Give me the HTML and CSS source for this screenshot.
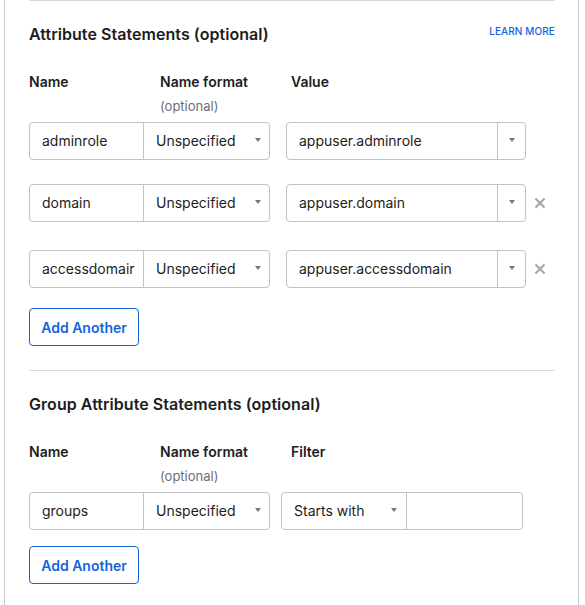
FILE: index.html
```html
<!DOCTYPE html>
<html lang="en">
<head>
<meta charset="utf-8">
<title>SAML Settings</title>
<link rel="stylesheet" href="styles.css">
</head>
<body>
<div class="panel">
  <section class="statements">
    <div class="section-head">
      <h2 class="section-title">Attribute Statements (optional)</h2>
      <a class="learn-more" href="#">LEARN MORE</a>
    </div>
    <div class="col-heads">
      <div class="col-head">Name</div>
      <div class="col-head">Name format<span class="hint">(optional)</span></div>
      <div class="col-head">Value</div>
    </div>

    <div class="row">
      <div class="field name-field">adminrole</div>
      <div class="field select fmt-select">Unspecified<span class="caret"></span></div>
      <div class="field value-field">appuser.adminrole</div>
      <div class="field combo-btn"><span class="caret"></span></div>
    </div>
    <div class="row row-second">
      <div class="field name-field">domain</div>
      <div class="field select fmt-select">Unspecified<span class="caret"></span></div>
      <div class="field value-field">appuser.domain</div>
      <div class="field combo-btn"><span class="caret"></span></div>
      <span class="remove" aria-label="Remove">
        <svg width="12" height="12" viewBox="0 0 12 12"><path d="M1.5 1.5 L10.5 10.5 M10.5 1.5 L1.5 10.5" stroke="currentColor" stroke-width="2.2" stroke-linecap="butt"/></svg>
      </span>
    </div>
    <div class="row row-third">
      <div class="field name-field">accessdomair</div>
      <div class="field select fmt-select">Unspecified<span class="caret"></span></div>
      <div class="field value-field">appuser.accessdomain</div>
      <div class="field combo-btn"><span class="caret"></span></div>
      <span class="remove" aria-label="Remove">
        <svg width="12" height="12" viewBox="0 0 12 12"><path d="M1.5 1.5 L10.5 10.5 M10.5 1.5 L1.5 10.5" stroke="currentColor" stroke-width="2.2" stroke-linecap="butt"/></svg>
      </span>
    </div>
    <button class="add-btn" type="button">Add Another</button>
  </section>

  <section class="statements group">
    <div class="section-head">
      <h2 class="section-title">Group Attribute Statements (optional)</h2>
    </div>
    <div class="col-heads">
      <div class="col-head">Name</div>
      <div class="col-head">Name format<span class="hint">(optional)</span></div>
      <div class="col-head">Filter</div>
    </div>
    <div class="row">
      <div class="field name-field">groups</div>
      <div class="field select fmt-select">Unspecified<span class="caret"></span></div>
      <div class="field select filter-select">Starts with<span class="caret"></span></div>
      <div class="field filter-value"></div>
    </div>
    <button class="add-btn add-btn-group" type="button">Add Another</button>
  </section>
</div>
</body>
</html>
```

FILE: styles.css
```css
* {
  box-sizing: border-box;
}

html, body {
  margin: 0;
  padding: 0;
  background: #ffffff;
}

body {
  font-family: "Inter", "Liberation Sans", sans-serif;
  color: #1d1d21;
  font-size: 14px;
}

.panel {
  margin-left: 4px;
  width: 575px;
  min-height: 605px;
  border-left: 1px solid #c8c8cf;
  border-right: 1px solid #c8c8cf;
  padding: 0 23px 0 24px;
}

.statements {
  border-top: 1px solid #d7d7dc;
  padding: 23px 0 24px;
}

.section-head {
  display: flex;
  justify-content: space-between;
  align-items: flex-start;
  height: 20px;
}

.section-title {
  margin: 0;
  font-size: 16px;
  line-height: 20px;
  font-weight: 600;
  letter-spacing: 0.05px;
}

.learn-more {
  font-size: 10px;
  line-height: 14px;
  font-weight: 500;
  color: #1662dd;
  text-decoration: none;
  letter-spacing: 0.1px;
}

.col-heads {
  display: flex;
  margin-top: 26px;
}

.col-head {
  width: 131px;
  font-size: 14px;
  line-height: 24px;
  font-weight: 600;
}

.hint {
  display: block;
  font-size: 13px;
  font-weight: 400;
  color: #6e6e78;
}

.row {
  display: flex;
  align-items: center;
  margin-top: 4px;
}

.row-second {
  margin-top: 24px;
}

.row-third {
  margin-top: 28px;
}

.field {
  position: relative;
  height: 38px;
  line-height: 36px;
  border: 1px solid #c1c1c8;
  padding: 0 12px;
  font-size: 14px;
  white-space: nowrap;
  overflow: hidden;
  background: #fff;
}

.name-field {
  width: 115px;
  border-radius: 4px 0 0 4px;
}

.fmt-select {
  width: 127px;
  margin-left: -1px;
  border-radius: 0 4px 4px 0;
}

.value-field {
  width: 212px;
  margin-left: 16px;
  border-radius: 4px 0 0 4px;
}

.combo-btn {
  width: 29px;
  margin-left: -1px;
  border-radius: 0 4px 4px 0;
}

.filter-select {
  width: 126px;
  margin-left: 11px;
  border-radius: 4px 0 0 4px;
}

.filter-value {
  width: 117px;
  margin-left: -1px;
  border-radius: 0 4px 4px 0;
}

/* small dropdown triangle */
.caret {
  position: absolute;
  top: 15px;
  right: 8px;
  width: 0;
  height: 0;
  border-left: 3px solid transparent;
  border-right: 3px solid transparent;
  border-top: 4px solid #75757e;
}

.combo-btn .caret {
  right: 10px;
}

.filter-select .caret {
  right: 9px;
}

.remove {
  display: flex;
  margin-left: 8px;
  color: #a6a6ae;
}

.add-btn {
  display: block;
  margin-top: 20px;
  height: 38px;
  width: 110px;
  padding: 0;
  border: 1px solid #1662dd;
  border-radius: 4px;
  background: #fff;
  color: #1662dd;
  font-family: inherit;
  font-size: 14px;
  font-weight: 600;
  text-align: center;
}

.add-btn-group {
  margin-top: 16px;
}
```
